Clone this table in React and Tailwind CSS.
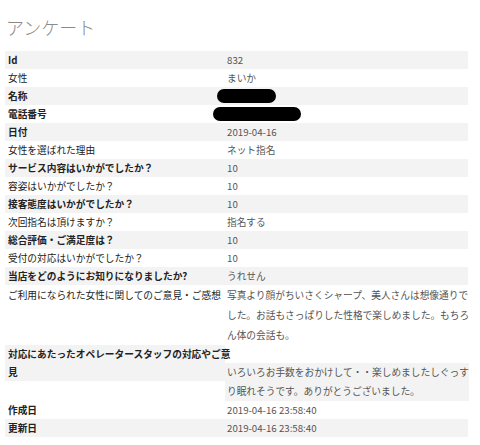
const FONT = "font-['Noto_Sans_CJK_JP','Liberation_Sans',sans-serif]";

const rows = [
  { label: "Id", value: "832", bold: true },
  { label: "女性", value: "まいか" },
  { label: "名称", redact: "w-[59px] -ml-[10px]", bold: true },
  { label: "電話番号", redact: "w-[88px] -ml-[14px] -mt-px", bold: true },
  { label: "日付", value: "2019-04-16", bold: true },
  { label: "女性を選ばれた理由", value: "ネット指名" },
  { label: "サービス内容はいかがでしたか？", value: "10", bold: true },
  { label: "容姿はいかがでしたか？", value: "10" },
  { label: "接客態度はいかがでしたか？", value: "10", bold: true },
  { label: "次回指名は頂けますか？", value: "指名する" },
  { label: "総合評価・ご満足度は？", value: "10", bold: true },
  { label: "受付の対応はいかがでしたか？", value: "10" },
  { label: "当店をどのようにお知りになりましたか?", value: "うれせん", bold: true },
];

function Row({ row, gray }) {
  return (
    <div className={`flex h-[18px] items-center ${gray ? "bg-[#f3f3f3]" : ""}`}>
      <div
        className={`w-[220px] shrink-0 pl-[3px] text-[#222] ${
          row.bold ? "font-bold" : ""
        }`}
      >
        {row.label}
      </div>
      <div className="flex-1 pl-[2px] text-[#555]">
        {row.redact ? (
          <span className={`block h-[14px] rounded-full bg-black ${row.redact}`} />
        ) : (
          row.value
        )}
      </div>
    </div>
  );
}

export default function App() {
  return (
    <div className={`w-[480px] h-[445px] bg-white px-[5px] pt-[15px] ${FONT} text-[9.7px] leading-[18px]`}>
      <h1 className="pl-[1px] text-[18px] leading-[24px] font-light text-[#8a8a8a] mb-[12px]">
        アンケート
      </h1>

      <div className="w-[463px]">
        {rows.map((r, i) => (
          <Row key={r.label} row={r} gray={i % 2 === 0} />
        ))}

        {/* ご意見・ご感想 */}
        <div className="flex">
          <div className="w-[220px] shrink-0 pl-[3px] pt-px text-[#222] whitespace-nowrap">
            ご利用になられた女性に関してのご意見・ご感想
          </div>
          <div className="flex-1 pl-[2px] text-[#555] leading-[20px] whitespace-nowrap">
            写真より顔がちいさくシャープ、美人さんは想像通りで
            <br />
            した。お話もさっぱりした性格で楽しめました。もちろ
            <br />
            ん体の会話も。
          </div>
        </div>

        {/* オペレーター */}
        <div className="flex">
          <div className="w-[220px] h-[36px] shrink-0 pl-[3px] bg-[#f3f3f3] font-bold text-[#222] whitespace-nowrap">
            対応にあたったオペレータースタッフの対応やご意
            <br />見
          </div>
          <div className="flex-1 mt-[18px] pl-[2px] bg-[#f3f3f3] text-[#555] leading-[19px] whitespace-nowrap">
            いろいろお手数をおかけして・・楽しめましたしぐっす
            <br />
            り眠れそうです。ありがとうございました。
          </div>
        </div>

        <Row row={{ label: "作成日", value: "2019-04-16 23:58:40", bold: true }} gray={false} />
        <Row row={{ label: "更新日", value: "2019-04-16 23:58:40", bold: true }} gray={true} />
      </div>
    </div>
  );
}
